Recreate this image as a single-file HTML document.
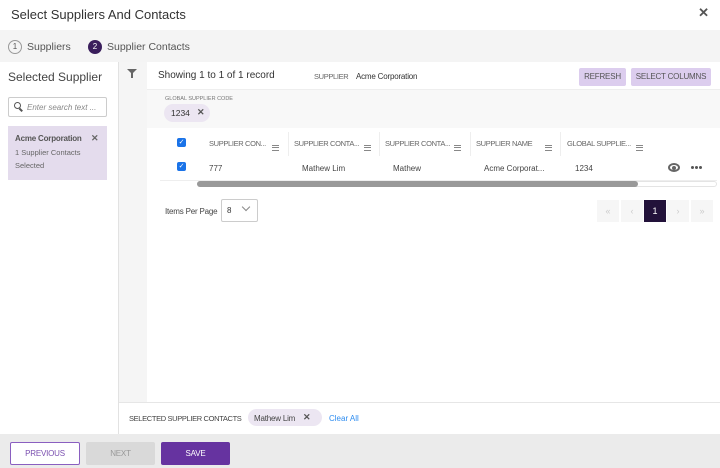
<!DOCTYPE html><html><head><style>
*{box-sizing:border-box;margin:0;padding:0}
body{width:720px;height:468px;position:relative;font-family:"Liberation Sans",sans-serif;background:#fff;overflow:hidden;color:#333}
.a{position:absolute}
.s{font-size:8px;color:#444;white-space:nowrap}
.c{font-size:7.5px;letter-spacing:-0.35px}
.btn{position:absolute;font-size:8px;text-align:center;border-radius:2px;letter-spacing:-0.2px}
.ham{display:inline-block;width:7px;height:6px;border-top:1px solid #888;border-bottom:1px solid #888;position:relative;vertical-align:middle}
.ham:after{content:"";position:absolute;left:0;right:0;top:1.5px;border-top:1px solid #888}
.cb{position:absolute;width:9px;height:9px;background:#1a73e8;border-radius:2px;color:#fff;font-size:7px;line-height:9px;text-align:center}
.dot{position:absolute;width:3px;height:3px;background:#555;border-radius:50%}
</style></head><body>
<div class="a" style="left:11px;top:7px;font-size:13px;color:#333">Select Suppliers And Contacts</div>
<div class="a" style="right:11px;top:5px;font-size:13px;font-weight:bold;color:#555">✕</div>
<div class="a" style="left:0;top:30px;width:720px;height:32px;background:#f4f4f4"></div>
<div class="a" style="left:8px;top:40px;width:14px;height:14px;border:1px solid #999;border-radius:50%;font-size:8px;text-align:center;line-height:12px;color:#555">1</div>
<div class="a" style="left:27px;top:41px;font-size:10.5px;color:#555">Suppliers</div>
<div class="a" style="left:88px;top:40px;width:14px;height:14px;background:#3a1e5c;border-radius:50%;font-size:8px;text-align:center;line-height:14px;color:#fff">2</div>
<div class="a" style="left:107px;top:41px;font-size:10.5px;color:#555">Supplier Contacts</div>
<div class="a" style="left:118px;top:62px;width:1px;height:372px;background:#e2e2e2"></div>
<div class="a" style="left:8px;top:70px;font-size:12px;color:#444">Selected Supplier</div>
<div class="a" style="left:8px;top:97px;width:99px;height:20px;border:1px solid #ccc;border-radius:2px"></div>
<div class="a" style="left:14px;top:102px;width:7px;height:7px;border:1.5px solid #555;border-radius:50%"></div>
<div class="a" style="left:19px;top:109px;width:4px;height:1.5px;background:#555;transform:rotate(45deg)"></div>
<div class="a" style="left:27px;top:103px;font-size:8px;font-style:italic;color:#888">Enter search text ...</div>
<div class="a" style="left:8px;top:126px;width:99px;height:54px;background:#e4dced"></div>
<div class="a" style="left:15px;top:134px;font-size:8px;font-weight:bold;color:#555;letter-spacing:-0.2px">Acme Corporation</div>
<div class="a" style="left:91px;top:133px;font-size:9px;font-weight:bold;color:#666">✕</div>
<div class="a" style="left:15px;top:148px;font-size:7.5px;color:#666">1 Supplier Contacts</div>
<div class="a" style="left:15px;top:161px;font-size:7.5px;color:#666">Selected</div>
<div class="a" style="left:119px;top:62px;width:28px;height:340px;background:#f5f5f5"></div>
<div class="a" style="left:127px;top:69px;width:0;height:0;border-left:5px solid transparent;border-right:5px solid transparent;border-top:5px solid #666"></div>
<div class="a" style="left:131px;top:73px;width:2px;height:5px;background:#666"></div>
<div class="a" style="left:147px;top:89px;width:573px;height:39px;background:#f8f8f8;border-top:1px solid #eee"></div>
<div class="a" style="left:158px;top:70px;font-size:10px;color:#333">Showing 1 to 1 of 1 record</div>
<div class="a s c" style="left:314px;top:72px;color:#666">SUPPLIER</div>
<div class="a s" style="left:356px;top:72px;color:#333;letter-spacing:-0.2px">Acme Corporation</div>
<div class="btn" style="left:579px;top:68px;width:47px;height:18px;background:#dccdee;line-height:18px;color:#555">REFRESH</div>
<div class="btn" style="left:631px;top:68px;width:80px;height:18px;background:#dccdee;line-height:18px;color:#555">SELECT COLUMNS</div>
<div class="a" style="left:165px;top:96px;font-size:5.5px;color:#777">GLOBAL SUPPLIER CODE</div>
<div class="a" style="left:164px;top:104px;width:46px;height:18px;background:#ece6f2;border-radius:9px"></div>
<div class="a" style="left:171px;top:108px;font-size:8.5px">1234</div>
<div class="a" style="left:197px;top:107px;font-size:9px;font-weight:bold;color:#555">✕</div>
<div class="cb" style="left:177px;top:138px">✓</div>
<div class="cb" style="left:177px;top:162px">✓</div>
<div class="a s c" style="left:209px;top:139px;color:#666">SUPPLIER CON...</div><div class="a" style="left:272px;top:139px"><span class="ham"></span></div>
<div class="a" style="left:288px;top:132px;width:1px;height:24px;background:#eee"></div>
<div class="a s c" style="left:294px;top:139px;color:#666">SUPPLIER CONTA...</div><div class="a" style="left:364px;top:139px"><span class="ham"></span></div>
<div class="a" style="left:379px;top:132px;width:1px;height:24px;background:#eee"></div>
<div class="a s c" style="left:385px;top:139px;color:#666">SUPPLIER CONTA...</div><div class="a" style="left:454px;top:139px"><span class="ham"></span></div>
<div class="a" style="left:470px;top:132px;width:1px;height:24px;background:#eee"></div>
<div class="a s c" style="left:476px;top:139px;color:#666">SUPPLIER NAME</div><div class="a" style="left:545px;top:139px"><span class="ham"></span></div>
<div class="a" style="left:560px;top:132px;width:1px;height:24px;background:#eee"></div>
<div class="a s c" style="left:567px;top:139px;color:#666">GLOBAL SUPPLIE...</div><div class="a" style="left:636px;top:139px"><span class="ham"></span></div>
<div class="a s" style="left:209px;top:164px">777</div>
<div class="a s" style="left:302px;top:164px">Mathew Lim</div>
<div class="a s" style="left:393px;top:164px">Mathew</div>
<div class="a s" style="left:484px;top:164px">Acme Corporat...</div>
<div class="a s" style="left:575px;top:164px">1234</div>
<div class="a" style="left:668px;top:163px;width:12px;height:9px;border:2px solid #666;border-radius:50%"></div>
<div class="a" style="left:672px;top:166px;width:4px;height:4px;background:#666;border-radius:50%"></div>
<div class="dot" style="left:691px;top:166px"></div><div class="dot" style="left:695px;top:166px"></div><div class="dot" style="left:699px;top:166px"></div>
<div class="a" style="left:160px;top:180px;width:557px;height:1px;background:#eee"></div>
<div class="a" style="left:197px;top:181px;width:520px;height:6px;border:1px solid #e4e4e4;border-radius:3px"></div>
<div class="a" style="left:197px;top:181px;width:441px;height:6px;background:#999;border-radius:3px"></div>
<div class="a s" style="left:165px;top:207px;letter-spacing:-0.2px">Items Per Page</div>
<div class="a" style="left:221px;top:199px;width:37px;height:23px;border:1px solid #ccc;border-radius:2px"></div>
<div class="a" style="left:227px;top:206px;font-size:8px">8</div>
<div class="a" style="left:243px;top:204px;width:6px;height:6px;border-right:1px solid #888;border-bottom:1px solid #888;transform:rotate(45deg)"></div>
<div class="a" style="left:597px;top:200px;width:22px;height:22px;background:#f6f6f6;color:#ccc;font-size:9px;text-align:center;line-height:22px">«</div>
<div class="a" style="left:621px;top:200px;width:22px;height:22px;background:#f6f6f6;color:#ccc;font-size:9px;text-align:center;line-height:22px">‹</div>
<div class="a" style="left:644px;top:200px;width:22px;height:22px;background:#22123a;color:#fff;font-size:9px;text-align:center;line-height:22px">1</div>
<div class="a" style="left:667px;top:200px;width:22px;height:22px;background:#f6f6f6;color:#ccc;font-size:9px;text-align:center;line-height:22px">›</div>
<div class="a" style="left:691px;top:200px;width:22px;height:22px;background:#f6f6f6;color:#ccc;font-size:9px;text-align:center;line-height:22px">»</div>
<div class="a" style="left:119px;top:402px;width:601px;height:1px;background:#e6e6e6"></div>
<div class="a s c" style="left:129px;top:414px;color:#444">SELECTED SUPPLIER CONTACTS</div>
<div class="a" style="left:248px;top:409px;width:74px;height:17px;background:#ece6f2;border-radius:9px"></div>
<div class="a s" style="left:254px;top:414px;letter-spacing:-0.2px">Mathew Lim</div>
<div class="a" style="left:303px;top:412px;font-size:9px;font-weight:bold;color:#555">✕</div>
<div class="a s" style="left:329px;top:414px;color:#2d8cf0">Clear All</div>
<div class="a" style="left:0;top:434px;width:720px;height:34px;background:#ebebeb"></div>
<div class="btn" style="left:10px;top:442px;width:70px;height:23px;background:#fff;border:1px solid #8a5fc0;line-height:21px;color:#7a4fb0">PREVIOUS</div>
<div class="btn" style="left:86px;top:442px;width:69px;height:23px;background:#d9d9d9;line-height:23px;color:#999">NEXT</div>
<div class="btn" style="left:161px;top:442px;width:69px;height:23px;background:#6633a0;line-height:23px;color:#fff">SAVE</div>
</body></html>
